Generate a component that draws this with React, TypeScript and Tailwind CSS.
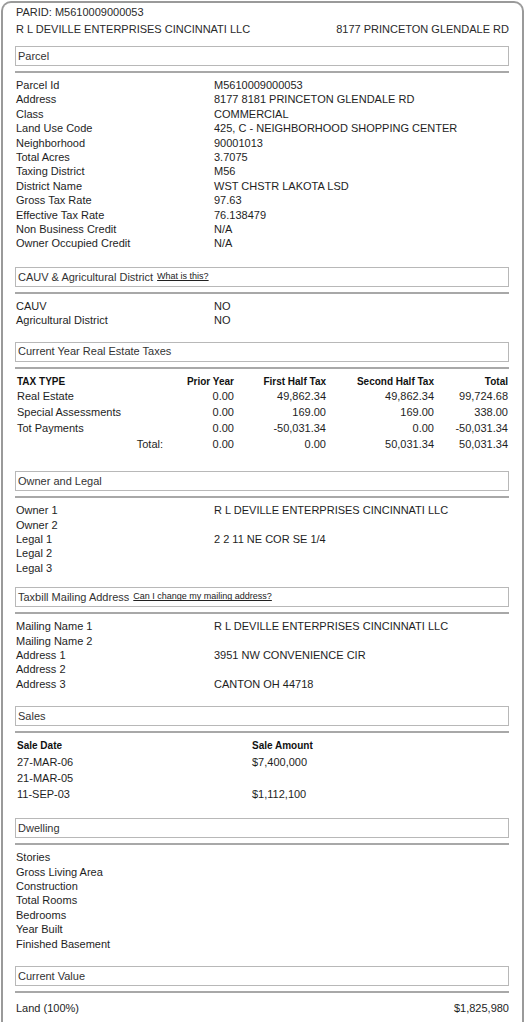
import React from "react";

type Row = [string, string];

const parcelRows: Row[] = [
  ["Parcel Id", "M5610009000053"],
  ["Address", "8177 8181 PRINCETON GLENDALE RD"],
  ["Class", "COMMERCIAL"],
  ["Land Use Code", "425, C - NEIGHBORHOOD SHOPPING CENTER"],
  ["Neighborhood", "90001013"],
  ["Total Acres", "3.7075"],
  ["Taxing District", "M56"],
  ["District Name", "WST CHSTR LAKOTA LSD"],
  ["Gross Tax Rate", "97.63"],
  ["Effective Tax Rate", "76.138479"],
  ["Non Business Credit", "N/A"],
  ["Owner Occupied Credit", "N/A"],
];

const cauvRows: Row[] = [
  ["CAUV", "NO"],
  ["Agricultural District", "NO"],
];

const ownerRows: Row[] = [
  ["Owner 1", "R L DEVILLE ENTERPRISES CINCINNATI LLC"],
  ["Owner 2", ""],
  ["Legal 1", "2 2 11 NE COR SE 1/4"],
  ["Legal 2", ""],
  ["Legal 3", ""],
];

const mailingRows: Row[] = [
  ["Mailing Name 1", "R L DEVILLE ENTERPRISES CINCINNATI LLC"],
  ["Mailing Name 2", ""],
  ["Address 1", "3951 NW CONVENIENCE CIR"],
  ["Address 2", ""],
  ["Address 3", "CANTON OH 44718"],
];

const dwellingRows: Row[] = [
  ["Stories", ""],
  ["Gross Living Area", ""],
  ["Construction", ""],
  ["Total Rooms", ""],
  ["Bedrooms", ""],
  ["Year Built", ""],
  ["Finished Basement", ""],
];

const taxRows = [
  ["Real Estate", "0.00", "49,862.34", "49,862.34", "99,724.68"],
  ["Special Assessments", "0.00", "169.00", "169.00", "338.00"],
  ["Tot Payments", "0.00", "-50,031.34", "0.00", "-50,031.34"],
];

const sales = [
  ["27-MAR-06", "$7,400,000"],
  ["21-MAR-05", ""],
  ["11-SEP-03", "$1,112,100"],
];

function SectionHead({ title, link }: { title: string; link?: string }) {
  return (
    <div>
      <div className="h-[20px] border border-[#b8b8b8] px-[2px] flex items-center text-[#333]">
        {title}
        {link && (
          <span className="ml-[4px] text-[9px] text-[#222] underline">{link}</span>
        )}
      </div>
      <div className="mt-[5px] h-[2px] border-t-2 border-[#a8a8a8]" />
    </div>
  );
}

function InfoRows({ rows }: { rows: Row[] }) {
  return (
    <div className="mt-[5px] leading-[14.4px]">
      {rows.map(([label, value]) => (
        <div key={label} className="grid grid-cols-[199px_1fr]">
          <span className="pl-px">{label}</span>
          <span>{value}</span>
        </div>
      ))}
    </div>
  );
}

export default function App() {
  return (
    <div className="w-[528px] min-h-[1022px] bg-white font-['Liberation_Sans',Arial,sans-serif] text-[11px] text-[#1e1e1e] pt-px">
      <div className="ml-px mr-[4px] min-h-[1021px] border-2 border-b border-[#9a9a9a] border-b-[#d8d8d8] rounded-t-[10px] pl-[12px] pr-[13px] pt-[2px] pb-[6px]">
        <div className="leading-[14px] text-[#2a2a2a]">
          <div className="pl-px">PARID: M5610009000053</div>
          <div className="mt-[3px] flex justify-between pl-px">
            <span>R L DEVILLE ENTERPRISES CINCINNATI LLC</span>
            <span>8177 PRINCETON GLENDALE RD</span>
          </div>
        </div>

        <div className="mt-[10px]">
          <SectionHead title="Parcel" />
          <InfoRows rows={parcelRows} />
        </div>

        <div className="mt-[16px]">
          <SectionHead title="CAUV & Agricultural District" link="What is this?" />
          <InfoRows rows={cauvRows} />
        </div>

        <div className="mt-[14px]">
          <SectionHead title="Current Year Real Estate Taxes" />
          <div className="mt-[5px] leading-[15.7px]">
            <div className="grid grid-cols-[151px_68px_92px_108px_74px] text-[10px] font-bold text-[#111]">
              <span className="pl-[2px]">TAX TYPE</span>
              <span className="text-right">Prior Year</span>
              <span className="text-right">First Half Tax</span>
              <span className="text-right">Second Half Tax</span>
              <span className="text-right">Total</span>
            </div>
            {taxRows.map((r) => (
              <div key={r[0]} className="grid grid-cols-[151px_68px_92px_108px_74px]">
                <span className="pl-[2px]">{r[0]}</span>
                <span className="text-right">{r[1]}</span>
                <span className="text-right">{r[2]}</span>
                <span className="text-right">{r[3]}</span>
                <span className="text-right">{r[4]}</span>
              </div>
            ))}
            <div className="grid grid-cols-[151px_68px_92px_108px_74px]">
              <span className="text-right pr-[3px]">Total:</span>
              <span className="text-right">0.00</span>
              <span className="text-right">0.00</span>
              <span className="text-right">50,031.34</span>
              <span className="text-right">50,031.34</span>
            </div>
          </div>
        </div>

        <div className="mt-[19px]">
          <SectionHead title="Owner and Legal" />
          <InfoRows rows={ownerRows} />
        </div>

        <div className="mt-[12px]">
          <SectionHead title="Taxbill Mailing Address" link="Can I change my mailing address?" />
          <InfoRows rows={mailingRows} />
        </div>

        <div className="mt-[15px]">
          <SectionHead title="Sales" />
          <div className="mt-[5px] leading-[16px]">
            <div className="grid grid-cols-[237px_1fr] text-[10px] font-bold text-[#111]">
              <span className="pl-[2px]">Sale Date</span>
              <span>Sale Amount</span>
            </div>
            {sales.map(([d, a]) => (
              <div key={d} className="grid grid-cols-[237px_1fr]">
                <span className="pl-[2px]">{d}</span>
                <span>{a}</span>
              </div>
            ))}
          </div>
        </div>

        <div className="mt-[16px]">
          <SectionHead title="Dwelling" />
          <InfoRows rows={dwellingRows} />
        </div>

        <div className="mt-[15px]">
          <SectionHead title="Current Value" />
          <div className="mt-[8px] leading-[14.4px] flex justify-between pl-px">
            <span>Land (100%)</span>
            <span>$1,825,980</span>
          </div>
        </div>
      </div>
    </div>
  );
}
